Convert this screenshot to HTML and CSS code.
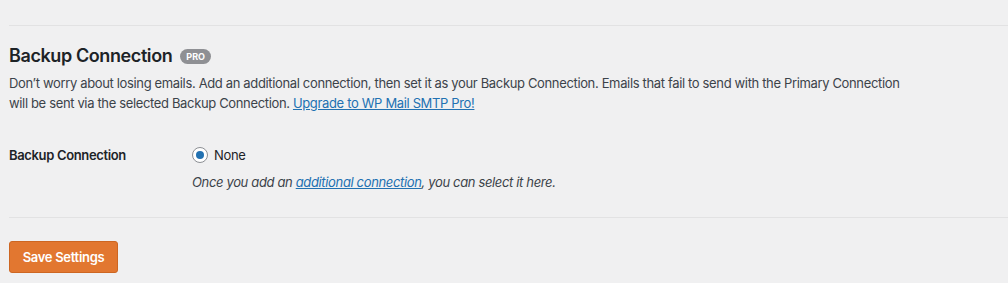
FILE: index.html
```html
<!DOCTYPE html>
<html lang="en">
<head>
    <meta charset="UTF-8">
    <title>Backup Connection</title>
    <link rel="stylesheet" href="styles.css">
</head>
<body>
    <div class="section">
        <div class="section-head">
            <h2>Backup Connection <span class="badge">PRO</span></h2>
            <p class="desc">Don’t worry about losing emails. Add an additional connection, then set it as your Backup Connection. Emails that fail to send with the Primary Connection will be sent via the selected Backup Connection. <a href="#">Upgrade to WP Mail SMTP Pro!</a></p>
        </div>

        <div class="row">
            <div class="label">Backup Connection</div>
            <div class="field">
                <label class="radio"><span class="dot"></span>None</label>
                <p class="help">Once you add an <a href="#">additional connection</a>, you can select it here.</p>
            </div>
        </div>
    </div>

    <div class="actions">
        <button class="btn">Save Settings</button>
    </div>
</body>
</html>
```

FILE: styles.css
```css
body {
    font-family: Inter, "Open Sans", sans-serif;
    background-color: #f0f0f1;
    color: #3c434a;
    margin: 0;
    padding: 0 0 0 9px;
    font-size: 13px;
    letter-spacing: -0.35px;
}
a {
    color: #2271b1;
    text-decoration: underline;
}
.section {
    border-top: 1px solid #e2e2e3;
    border-bottom: 1px solid #e2e2e3;
    margin-top: 25px;
    padding: 20px 0 25px;
}
h2 {
    font-size: 18px;
    font-weight: 600;
    color: #1d2327;
    margin: 0;
    line-height: 20px;
    display: flex;
    align-items: center;
    gap: 8px;
    letter-spacing: -0.4px;
}
.badge {
    background-color: #8f9094;
    color: #fff;
    font-size: 9px;
    font-weight: 700;
    border-radius: 8px;
    padding: 1px 6px;
    line-height: 13px;
    letter-spacing: 0;
}
.desc {
    margin: 7px 0 0;
    line-height: 20px;
    max-width: 905px;
}
.row {
    display: flex;
    margin-top: 32px;
}
.label {
    width: 183px;
    font-weight: 600;
    color: #1d2327;
    line-height: 20px;
    letter-spacing: -0.35px;
}
.radio {
    display: flex;
    align-items: center;
    gap: 6px;
    color: #1d2327;
    line-height: 20px;
}
.dot {
    width: 14px;
    height: 14px;
    border: 1px solid #8c8f94;
    border-radius: 50%;
    background-color: #fff;
    display: flex;
    align-items: center;
    justify-content: center;
}
.dot::after {
    content: "";
    width: 8px;
    height: 8px;
    border-radius: 50%;
    background-color: #2271b1;
}
.help {
    font-style: italic;
    margin: 7px 0 0;
    line-height: 20px;
}
.actions {
    padding-top: 23px;
}
.btn {
    background-color: #e27730;
    border: 1px solid #cd6622;
    border-radius: 3px;
    color: #fff;
    font-family: inherit;
    font-size: 13px;
    font-weight: 600;
    letter-spacing: -0.3px;
    width: 109px;
    height: 32px;
    padding: 0;
}
```
